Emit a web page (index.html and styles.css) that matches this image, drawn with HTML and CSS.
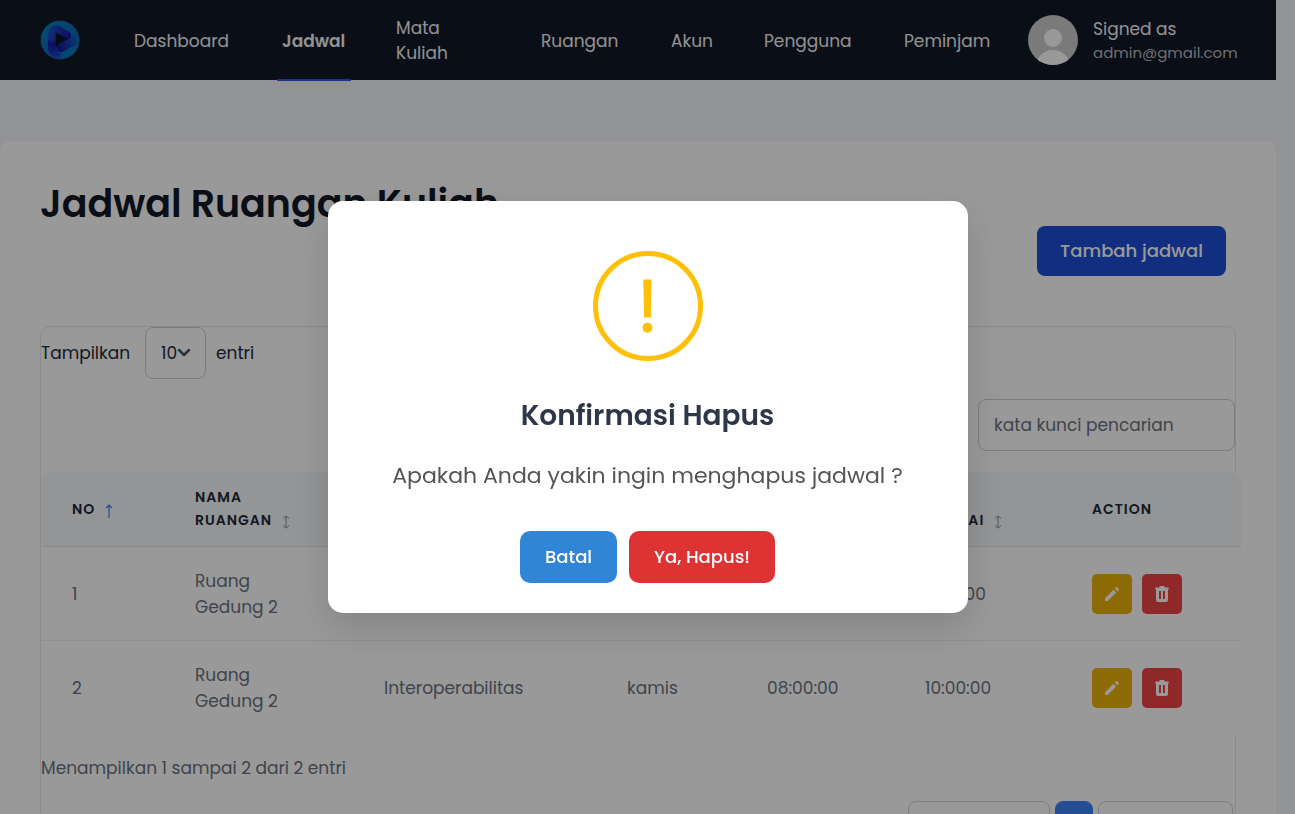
FILE: index.html
```html
<!DOCTYPE html>
<html lang="id">
<head>
<meta charset="utf-8">
<meta name="viewport" content="width=device-width, initial-scale=1">
<title>Jadwal Ruangan Kuliah</title>
<link rel="stylesheet" href="styles.css">
</head>
<body>
<header class="topbar">
  <a href="#" class="logo" aria-label="Beranda">
    <svg viewBox="0 0 40 40" width="40" height="40" aria-hidden="true">
      <defs>
        <clipPath id="round"><circle cx="20" cy="20" r="19.5"/></clipPath>
        <linearGradient id="ring" x1="0" y1="0" x2="1" y2="1"><stop offset="0" stop-color="#0784c4"/><stop offset=".5" stop-color="#0a6cb8"/><stop offset="1" stop-color="#0080c0"/></linearGradient>
        <linearGradient id="top" gradientUnits="userSpaceOnUse" x1="9" y1="10" x2="31" y2="16"><stop offset="0" stop-color="#1b52c4"/><stop offset="1" stop-color="#15159a"/></linearGradient>
        <linearGradient id="side" gradientUnits="userSpaceOnUse" x1="12" y1="12" x2="14" y2="38"><stop offset="0" stop-color="#1c3fc0"/><stop offset=".5" stop-color="#1818a4"/><stop offset="1" stop-color="#1c50c4"/></linearGradient>
        <linearGradient id="low" gradientUnits="userSpaceOnUse" x1="18" y1="29" x2="38" y2="17"><stop offset="0" stop-color="#14149a"/><stop offset=".5" stop-color="#1638b0"/><stop offset="1" stop-color="#0a6cb8"/></linearGradient>
      </defs>
      <g clip-path="url(#round)">
        <circle cx="20" cy="20" r="19.5" fill="url(#ring)"/>
        <path d="M12 14V27Q12 34 20 38" fill="none" stroke="url(#side)" stroke-width="8"/>
        <path d="M21 27.500L36 19" fill="none" stroke="url(#low)" stroke-width="9" stroke-linecap="round"/>
        <path d="M12 17V14Q12 8 18 10L27 15.500" fill="none" stroke="url(#top)" stroke-width="8" stroke-linecap="round" stroke-linejoin="round"/>
        <path d="M15.800 12.500L28 19L21 22.500Q17 24.500 16.500 27.500Q15.800 26 15.800 24Z" fill="#0b1120"/>
      </g>
    </svg>
  </a>
  <nav class="menu">
    <a href="#">Dashboard</a>
    <a href="#" class="active" aria-current="page">Jadwal</a>
    <a href="#">Mata<br>Kuliah</a>
    <a href="#">Ruangan</a>
    <a href="#">Akun</a>
    <a href="#">Pengguna</a>
    <a href="#">Peminjam</a>
  </nav>
  <div class="user">
    <svg class="avatar" viewBox="0 0 50 50" width="50" height="50" aria-hidden="true">
      <defs><clipPath id="disc"><circle cx="25" cy="25" r="25"/></clipPath></defs>
      <g clip-path="url(#disc)"><rect width="50" height="50" fill="#cbcbcb"/><circle cx="25" cy="23" r="9" fill="#fff"/><ellipse cx="25" cy="51" rx="17" ry="16" fill="#fff"/></g>
    </svg>
    <div class="who"><span class="who-label">Signed as</span><span class="who-mail">admin@gmail.com</span></div>
  </div>
</header>

<main class="card">
  <h1 class="title">Jadwal Ruangan Kuliah</h1>
  <div class="actions"><button type="button" class="add">Tambah jadwal</button></div>

  <section class="panel">
    <div class="length">
      <label for="len">Tampilkan</label>
      <span class="select-wrap">
        <select id="len"><option>10</option><option>25</option></select>
        <svg class="chevron" viewBox="0 0 14 14" width="14" height="14" aria-hidden="true"><path d="M2 5l5 5 5-5" fill="none" stroke="#4b5563" stroke-width="2.500" stroke-linecap="round" stroke-linejoin="round"/></svg>
      </span>
      <span>entri</span>
    </div>
    <div class="search"><input type="search" placeholder="kata kunci pencarian" aria-label="kata kunci pencarian"></div>

    <svg class="defs" width="0" height="0" aria-hidden="true">
      <symbol id="both" viewBox="0 0 8 14"><path d="M4 1v12M1 3.500L4 .800l3 2.700M1 10.500l3 2.700 3-2.700" fill="none" stroke="currentColor"/></symbol>
      <symbol id="up" viewBox="0 0 8 14"><path d="M4 1v13M1 4l3-3 3 3" fill="none" stroke="currentColor" stroke-width="1.200"/></symbol>
      <symbol id="pencil" viewBox="0 0 20 20"><path d="M13.600 3.600a1.500 1.500 0 0 1 2.100 0l.700.700a1.500 1.500 0 0 1 0 2.100l-.900.900-2.800-2.800zM11.400 5.800L3 14.200V17h2.800l8.400-8.400z" fill="currentColor"/></symbol>
      <symbol id="trash" viewBox="0 0 20 20"><path fill-rule="evenodd" d="M8 2h4l1 1.500h3.700v2H16V16a2 2 0 0 1-2 2H6a2 2 0 0 1-2-2V5.500h-.700v-2H7zM7 7v8h2V7zM11 7v8h2V7z" fill="currentColor"/></symbol>
    </svg>

    <table class="grid">
      <colgroup><col class="c-no"><col class="c-room"><col class="c-course"><col class="c-day"><col class="c-start"><col class="c-end"><col class="c-act"></colgroup>
      <thead>
        <tr>
          <th>NO<svg class="sort on"><use href="#up"/></svg></th>
          <th>NAMA RUANGAN<svg class="sort"><use href="#both"/></svg></th>
          <th>MATA KULIAH<svg class="sort"><use href="#both"/></svg></th>
          <th>HARI<svg class="sort"><use href="#both"/></svg></th>
          <th>JAM<br>MULAI<svg class="sort"><use href="#both"/></svg></th>
          <th>JAM<br>SELESAI<svg class="sort"><use href="#both"/></svg></th>
          <th>ACTION</th>
        </tr>
      </thead>
      <tbody>
        <tr>
          <td>1</td><td>Ruang Gedung 2</td><td>Interoperabilitas</td><td>senin</td><td>08:00:00</td><td>11:00:00</td>
          <td><div class="row-actions"><button type="button" class="edit" aria-label="Ubah"><svg><use href="#pencil"/></svg></button><button type="button" class="del" aria-label="Hapus"><svg><use href="#trash"/></svg></button></div></td>
        </tr>
        <tr>
          <td>2</td><td>Ruang Gedung 2</td><td>Interoperabilitas</td><td>kamis</td><td>08:00:00</td><td>10:00:00</td>
          <td><div class="row-actions"><button type="button" class="edit" aria-label="Ubah"><svg><use href="#pencil"/></svg></button><button type="button" class="del" aria-label="Hapus"><svg><use href="#trash"/></svg></button></div></td>
        </tr>
      </tbody>
    </table>

    <p class="info">Menampilkan 1 sampai 2 dari 2 entri</p>
    <div class="pages">
      <button type="button" class="page prev">Sebelumnya</button>
      <button type="button" class="page current">1</button>
      <button type="button" class="page next">Selanjutnya</button>
    </div>
  </section>
</main>

<div class="overlay">
  <div class="dialog" role="dialog" aria-modal="true" aria-labelledby="dlg-title">
    <svg class="warn" viewBox="0 0 110 110" width="110" height="110" aria-hidden="true">
      <circle cx="55" cy="55" r="52.500" fill="none" stroke="#ffc107" stroke-width="5"/>
      <path d="M50.300 28.500h8.200l-.700 38h-6.800z" fill="#ffc107"/><circle cx="54.500" cy="76.700" r="5" fill="#ffc107"/>
    </svg>
    <h2 id="dlg-title" class="dialog-title">Konfirmasi Hapus</h2>
    <p class="dialog-text">Apakah Anda yakin ingin menghapus jadwal ?</p>
    <div class="dialog-buttons">
      <button type="button" class="cancel">Batal</button>
      <button type="button" class="confirm">Ya, Hapus!</button>
    </div>
  </div>
</div>
</body>
</html>
```
FILE: styles.css
```css
* { box-sizing: border-box; }

body {
  margin: 0;
  padding-right: 19px;
  height: 100vh;
  overflow: hidden;
  background: #f3f5fa;
  color: #1f2937;
  font: 17px/26px Poppins, Inter, sans-serif;
}

button, input, select { font: inherit; margin: 0; }
button { border: 0; cursor: pointer; }
a { color: inherit; text-decoration: none; }

/* Top bar */
.topbar {
  display: flex;
  align-items: center;
  height: 80px;
  padding: 0 38px 0 40px;
  background: #111827;
  color: #f3f4f6;
}
.logo { display: flex; margin-right: 49px; }
.menu {
  flex: 1;
  display: grid;
  grid-template-columns: 108fr 74fr 105fr 90fr 53fr 100fr 99fr;
  column-gap: 40px;
  height: 82px;
  margin-right: 30px;
  line-height: 25px;
}
.menu a {
  display: flex;
  align-items: center;
  padding: 4px 5px 0;
  white-space: nowrap;
  border-bottom: 2px solid transparent;
}
.menu .active { border-color: #2a56e0; font-weight: 600; }
.user { display: flex; align-items: center; gap: 15px; min-width: 210px; }
.avatar { flex: none; }
.who { display: flex; flex-direction: column; padding-top: 2px; line-height: 23px; white-space: nowrap; }
.who-mail { font-size: 15px; color: #b8babf; }

/* Content card */
.card {
  margin-top: 61px;
  padding: 40px;
  background: #fff;
  border-radius: 10px;
}
.title { margin: 0; font-size: 38px; line-height: 45px; font-weight: 600; color: #111827; }
.actions { display: flex; justify-content: flex-end; padding-right: 10px; margin-bottom: 50px; }
.add {
  height: 50px;
  min-width: 189px;
  padding: 0 23px;
  border-radius: 8px;
  background: #1d4ed8;
  color: #fff;
  font-size: 18px;
  font-weight: 500;
}

.panel { border: 1px solid #e5e7eb; border-radius: 10px; }
.length { display: flex; align-items: center; gap: 10px; }
.length label { min-width: 94px; }
.select-wrap { position: relative; display: flex; }
.select-wrap select {
  appearance: none;
  width: 61px;
  height: 52px;
  padding: 0 15px;
  border: 1px solid #c9ced6;
  border-radius: 8px;
  background: transparent;
  color: inherit;
}
.chevron { position: absolute; right: 15px; top: 18px; pointer-events: none; }
.search { display: flex; justify-content: flex-end; margin: 20px 0 21px; }
.search input {
  appearance: none;
  width: 257px;
  height: 52px;
  padding: 0 15px;
  border: 1px solid #c9ced6;
  border-radius: 8px;
  background: #fff;
}
.search input::placeholder { color: #6b7280; opacity: 1; }
.defs { position: absolute; }

/* Table */
.grid {
  width: calc(100% + 5px);
  margin-left: 1px;
  table-layout: fixed;
  border-spacing: 0;
  background: #fff;
  text-align: left;
  color: #6b7280;
}
.c-no { width: 123px; }
.c-room { width: 189px; }
.c-course { width: 243px; }
.c-day { width: 140px; }
.c-start { width: 158px; }
.c-end { width: 167px; }
.grid th {
  padding: 14px 40px 14px 30px;
  background: #f5f8fb;
  border-bottom: 1px solid #dfe3e8;
  color: #1f2937;
  font-size: 14px;
  line-height: 23px;
  font-weight: 600;
  letter-spacing: 1px;
}
.grid th:first-child { border-top-left-radius: 10px; }
.grid th:last-child { border-top-right-radius: 10px; }
.grid td { padding: 21px 40px 20px 30px; border-bottom: 1px solid #eceef1; }
.grid tr:last-child td { border-bottom-color: transparent; }
.sort { width: 8px; height: 14px; margin-left: 10px; vertical-align: -4px; color: #8a8f98; }
.sort.on { color: #3b82f6; }
.row-actions { display: flex; gap: 10px; }
.row-actions button {
  display: grid;
  place-items: center;
  width: 40px;
  height: 40px;
  padding: 0;
  border-radius: 5px;
  color: #fff;
}
.row-actions svg { width: 20px; height: 20px; }
.edit { background: #eab308; }
.del { background: #ef4444; }

.info { margin: 20px 0; color: #6b7280; }
.pages { display: flex; justify-content: flex-end; gap: 5px; padding-right: 2px; }
.page { height: 52px; padding: 0 16px; border: 1px solid #d1d5db; border-radius: 8px; background: #fff; color: #6b7280; }
.prev { min-width: 142px; }
.next { min-width: 135px; }
.page.current { min-width: 38px; padding: 0; background: #3b82f6; border-color: #3b82f6; color: #fff; }

/* Confirmation dialog */
.overlay {
  position: fixed;
  inset: 0;
  display: flex;
  align-items: center;
  justify-content: center;
  background: rgba(0, 0, 0, .4);
}
.dialog {
  display: flex;
  flex-direction: column;
  align-items: center;
  width: 640px;
  max-width: 100%;
  padding: 50px 30px 30px;
  border-radius: 15px;
  background: #fff;
  box-shadow: 0 15px 40px rgba(0, 0, 0, .15);
}
.dialog-title { margin: 35px 0 22px; font-size: 28px; line-height: 40px; font-weight: 600; color: #2d3748; }
.dialog-text { margin: 0 0 37px; font-size: 22px; line-height: 36px; color: #545454; }
.dialog-buttons { display: flex; gap: 12px; }
.dialog-buttons button {
  height: 52px;
  padding: 0 25px;
  border-radius: 10px;
  color: #fff;
  font-size: 18px;
  font-weight: 500;
}
.cancel { background: #3085d6; }
.confirm { background: #dd3333; }
```
